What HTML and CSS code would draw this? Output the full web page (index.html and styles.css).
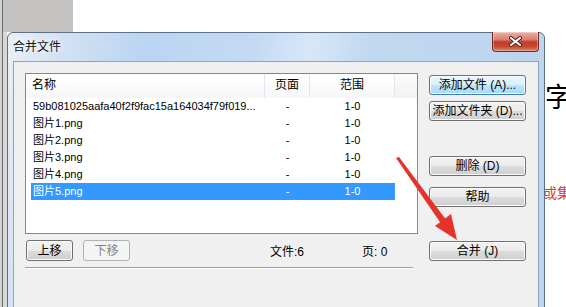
FILE: index.html
```html
<!doctype html>
<html lang="zh-CN">
<head>
  <meta charset="utf-8"/>
  <title>合并文件</title>
  <link rel="stylesheet" href="styles.css">
</head>
<body>
  <!-- desktop behind the dialog -->
  <div class="desk-strip"></div>
  <div class="desk-block"></div>
  <span class="desk-big">字</span>
  <span class="desk-red">或集</span>

  <!-- dialog -->
  <div class="win">
    <div class="titlebar">
      <span class="title">合并文件</span>
      <button class="close" title="关闭">
        <svg width="13" height="11" viewBox="0 0 13 11">
          <path d="M2 2 L11 9 M11 2 L2 9" stroke="#5a1a14" stroke-width="4" stroke-linecap="round"/>
          <path d="M2 2 L11 9 M11 2 L2 9" stroke="#fff" stroke-width="2.2" stroke-linecap="round"/>
        </svg>
      </button>
    </div>

    <div class="client">
      <div class="layout">
        <div class="list">
          <div class="list-head">
            <div class="col col-name">名称</div>
            <div class="col col-page">页面</div>
            <div class="col col-range">范围</div>
            <div class="col col-fill"></div>
          </div>
          <ul class="rows">
            <li><span class="c-name">59b081025aafa40f2f9fac15a164034f79f019...</span><span class="c-page">-</span><span class="c-range">1-0</span></li>
            <li><span class="c-name">图片1.png</span><span class="c-page">-</span><span class="c-range">1-0</span></li>
            <li><span class="c-name">图片2.png</span><span class="c-page">-</span><span class="c-range">1-0</span></li>
            <li><span class="c-name">图片3.png</span><span class="c-page">-</span><span class="c-range">1-0</span></li>
            <li><span class="c-name">图片4.png</span><span class="c-page">-</span><span class="c-range">1-0</span></li>
            <li class="sel"><span class="c-name">图片5.png</span><span class="c-page">-</span><span class="c-range">1-0</span></li>
          </ul>
        </div>

        <div class="side">
          <button class="btn btn-focus">添加文件 (A)...</button>
          <button class="btn btn-folder">添加文件夹 (D)...</button>
          <button class="btn btn-del">删除 (D)</button>
          <button class="btn btn-help">帮助</button>
        </div>

        <div class="bottom">
          <button class="btn btn-sm">上移</button>
          <button class="btn btn-sm" disabled>下移</button>
          <span class="stat stat-files">文件:6</span>
          <span class="stat">页: 0</span>
        </div>

        <div class="side-bottom">
          <button class="btn">合并 (J)</button>
        </div>
      </div>
      <div class="sep"></div>
    </div>
  </div>

  <!-- red pointer drawn over the screenshot -->
  <svg class="arrow" width="566" height="307" viewBox="0 0 566 307">
    <path d="M396 158 L399 157 L447 221 L442 225 Z" fill="#e5322b"/>
    <polygon points="457,240 435,226 451,214" fill="#e5322b"/>
  </svg>
</body>
</html>
```

FILE: styles.css
```css
*{box-sizing:border-box;margin:0;padding:0}
html,body{width:566px;height:307px;overflow:hidden;background:#fff}
body{position:relative;font:12px "Liberation Sans","Noto Sans CJK SC",sans-serif;color:#000}

/* ---------- desktop ---------- */
.desk-strip{
  position:absolute;left:0;top:0;width:7px;height:307px;
  background:linear-gradient(to right,#d2d2d2 0 2px,#6a6a6a 2px 3px,#d8d8d8 3px);
}
.desk-block{position:absolute;left:3px;top:0;width:70px;height:32px;background:#c5c3c1}
.desk-big{
  position:absolute;left:545px;top:82px;
  font:27px/1 "Noto Sans CJK SC",sans-serif;color:#000;
  white-space:nowrap;
}
.desk-red{
  position:absolute;left:543px;top:185px;
  font:14px/1 "Noto Sans CJK SC",sans-serif;color:#e03a36;
  white-space:nowrap;
}

/* ---------- window ---------- */
.win{
  position:absolute;left:7px;top:32px;
  width:538px;height:290px;
  display:flex;flex-direction:column;
  padding:0 5px;
  border:1px solid #5f6f84;
  border-radius:6px 6px 0 0;
  background:linear-gradient(100deg,#e9eff7 0,#d3e2f3 9%,#bad5f2 24%,#c3daf4 42%,#d7e7f8 52%,#c1d8f1 62%,#bcd4ee 100%);
}
.titlebar{height:28px;display:flex;align-items:flex-start}
.title{
  line-height:28px;font-size:12px;color:#111;
  text-shadow:0 0 6px #fff,0 0 10px #fff;
}
.close{
  margin-left:auto;margin-top:-1px;
  width:47px;height:20px;
  display:flex;align-items:center;justify-content:center;
  border:1px solid #6e2b25;border-top:none;
  border-radius:0 0 4px 4px;
  background:linear-gradient(#eab0a4 0%,#d88070 40%,#c23c2c 52%,#c4472f 75%,#de8262 100%);
  box-shadow:inset 0 0 0 1px rgba(255,255,255,.35);
}

.client{
  flex:1;
  background:#f0f0f0;
  border:1px solid #8fa4bf;
  padding:11px 12px 0 11px;
}
.layout{
  display:grid;
  grid-template-columns:393px 97px;
  column-gap:11px;
  row-gap:6px;
}

/* ---------- list ---------- */
.list{height:161px;border:1px solid #828790;background:#fff;overflow:hidden}
.list-head{display:flex;height:24px;background:linear-gradient(#fff,#f6f7f9)}
.col{line-height:23px;border-right:1px solid #e3e6ea;font-size:12px}
.col-name{width:239px;padding-left:6px}
.col-page{width:45px;text-align:center}
.col-range{width:85px;text-align:center}
.col-fill{flex:1;border-right:none;background:linear-gradient(#fbfbfb,#f2f3f5)}

.rows{list-style:none}
.rows li{display:flex;height:17px;line-height:17px;margin-left:5px;width:364px;font-size:11px;white-space:nowrap}
.rows li.sel{background:#3399ff;color:#fff}
.c-name{width:234px;padding-left:2px;overflow:hidden}
.c-page{width:45px;text-align:center}
.c-range{width:85px;text-align:center}

/* ---------- buttons ---------- */
.btn{
  height:20px;
  font:12px/18px "Liberation Sans","Noto Sans CJK SC",sans-serif;
  color:#000;
  border:1px solid #707070;
  border-radius:3px;
  background:linear-gradient(#f2f2f2,#ebebeb 50%,#dddddd 50%,#cfcfcf);
  box-shadow:inset 0 0 0 1px #fbfbfb;
  white-space:nowrap;
}
.btn-focus{
  border-color:#3c7fb1;
  background:linear-gradient(#eaf6fd,#d9f0fc 50%,#bee6fd 50%,#a7d9f5);
}
.btn:disabled{
  border-color:#adb2b5;
  background:#f4f4f4;
  color:#838383;
  box-shadow:none;
}

.side{display:flex;flex-direction:column;padding-top:2px}
.side .btn-folder{margin-top:6px}
.side .btn-del{margin-top:35px}
.side .btn-help{margin-top:11px}

.bottom{display:flex;align-items:center;height:21px}
.btn-sm{width:47px;height:21px}
.btn-sm:first-child{margin-left:1px}
.btn-sm + .btn-sm{margin-left:10px}
.stat{font-size:12px}
.stat-files{margin-left:140px;width:92px}

.side-bottom{display:flex;flex-direction:column;padding-top:1px}

.sep{
  margin-top:6px;
  width:388px;
  border-top:1px solid #a0a0a0;
  border-bottom:1px solid #fff;
}

/* ---------- pointer ---------- */
.arrow{position:absolute;left:0;top:0;pointer-events:none}
```
